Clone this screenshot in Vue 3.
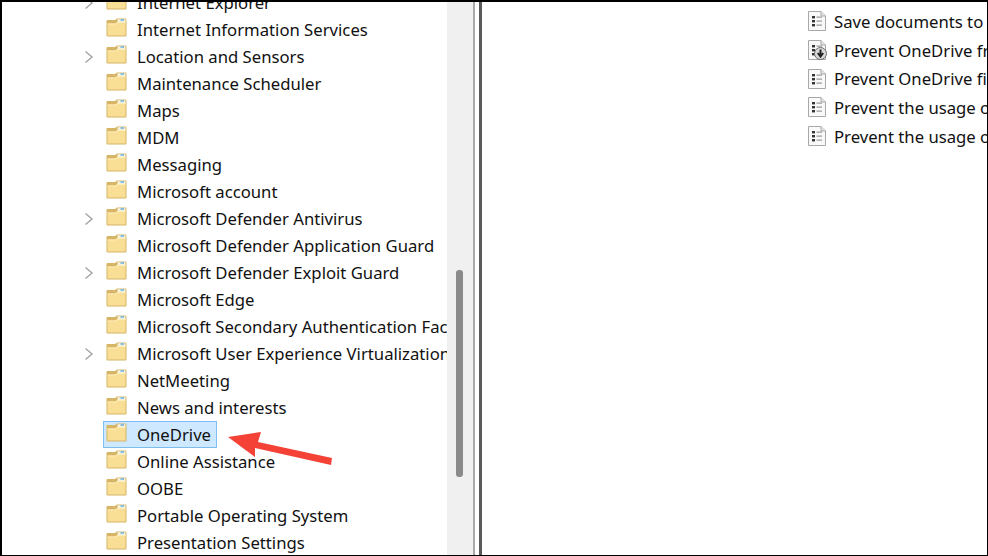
<script setup>
const rows = [
  { name: 'Internet Explorer', arrow: true },
  { name: 'Internet Information Services' },
  { name: 'Location and Sensors', arrow: true },
  { name: 'Maintenance Scheduler' },
  { name: 'Maps' },
  { name: 'MDM' },
  { name: 'Messaging' },
  { name: 'Microsoft account' },
  { name: 'Microsoft Defender Antivirus', arrow: true },
  { name: 'Microsoft Defender Application Guard' },
  { name: 'Microsoft Defender Exploit Guard', arrow: true },
  { name: 'Microsoft Edge' },
  { name: 'Microsoft Secondary Authentication Factor' },
  { name: 'Microsoft User Experience Virtualization', arrow: true },
  { name: 'NetMeeting' },
  { name: 'News and interests' },
  { name: 'OneDrive', selected: true },
  { name: 'Online Assistance' },
  { name: 'OOBE' },
  { name: 'Portable Operating System' },
  { name: 'Presentation Settings' },
]
const policies = [
  { name: 'Save documents to OneDrive by default' },
  { name: 'Prevent OneDrive from generating network traffic', download: true },
  { name: 'Prevent OneDrive files from syncing over metered connections' },
  { name: 'Prevent the usage of OneDrive for file storage' },
  { name: 'Prevent the usage of OneDrive for file storage (legacy)' },
]
</script>

<template>
  <div class="screen">
    <div class="tree">
      <div class="tree-list">
        <div v-for="r in rows" :key="r.name" class="row">
          <svg v-if="r.arrow" class="chev" width="10" height="14" viewBox="0 0 10 14"><path d="M1.5 1.5 L8 7 L1.5 12.5" fill="none" stroke="#a6a6a6" stroke-width="1.5"/></svg>
          <span v-else class="chev"></span>
          <span class="item" :class="{ selected: r.selected }">
            <svg class="folder" width="21" height="19" viewBox="0 0 21 19">
              <path d="M0.5 3 Q0.5 2 1.5 2 L9 2 L11 0.5 L19.5 0.5 Q20.5 0.5 20.5 1.5 L20.5 17.5 Q20.5 18.5 19.5 18.5 L1.5 18.5 Q0.5 18.5 0.5 17.5 Z" fill="#d6b566"/>
              <rect x="11.5" y="1.2" width="8" height="3" fill="#f6f1dc"/>
              <rect x="14.5" y="1.2" width="3.5" height="1.6" fill="#6fb4e0"/>
              <path d="M1.5 5.5 L9.5 5.5 L11.5 4 L19.5 4 L19.5 17.5 L1.5 17.5 Z" fill="#f9de96"/>
              <path d="M1.5 5.5 L9.5 5.5 L11.5 4 L19.5 4 L19.5 5 L11.8 5 L9.8 6.5 L1.5 6.5 Z" fill="#fdeeb9"/>
            </svg>
            <span class="label">{{ r.name }}</span>
          </span>
        </div>
      </div>
      <div class="scroll"><div class="thumb"></div></div>
    </div>
    <div class="splitter"></div>
    <div class="detail">
      <div class="policies">
        <div v-for="p in policies" :key="p.name" class="policy">
          <svg class="doc" width="20" height="22" viewBox="0 0 20 22">
            <path d="M1.5 1.5 H14 L18.5 6 V20.5 H1.5 Z" fill="#f9f9f9" stroke="#a8a8a8"/>
            <path d="M14 1.5 V6 H18.5" fill="#e4e4e4" stroke="#a8a8a8"/>
            <rect x="5" y="6" width="3" height="2.4" fill="#333"/>
            <rect x="5" y="10" width="3" height="2.4" fill="#333"/>
            <rect x="5" y="14" width="3" height="2.4" fill="#333"/>
            <path d="M9.5 7.2 H15 M9.5 11.2 H15 M9.5 15.2 H15" stroke="#9a9a9a" stroke-width="1.2"/>
            <g v-if="p.download">
              <circle cx="13.5" cy="14.5" r="6" fill="#d8d8d8" stroke="#6a6a6a"/>
              <path d="M13.5 10.5 V16 M10.8 14 L13.5 17.5 L16.2 14" fill="none" stroke="#222" stroke-width="2"/>
            </g>
          </svg>
          <span class="policy-text">{{ p.name }}</span>
        </div>
      </div>
    </div>
    <svg class="arrow" width="110" height="40" viewBox="0 0 110 40">
      <path d="M0 6 L33 1 L30 11 L104 27 L103 34 L27 17 L27 26 Z" fill="#f44336"/>
    </svg>
    <div class="frame"></div>
  </div>
</template>

<style>
html, body { margin: 0; background: #fff; }
</style>

<style scoped>
.screen {
  position: relative;
  width: 988px;
  height: 556px;
  overflow: hidden;
  display: flex;
  background: #fff;
  font-family: "Noto Sans", "Open Sans", sans-serif;
  color: #111;
}
.frame {
  position: absolute;
  inset: 0;
  border-style: solid;
  border-color: #000;
  border-width: 2px 1px 1px 2px;
  pointer-events: none;
}
.tree {
  width: 473px;
  height: 556px;
  display: flex;
  flex: none;
  border-right: 2px solid #a9a9a9;
  box-sizing: content-box;
}
.tree-list {
  width: 447px;
  flex: none;
  overflow: hidden;
  margin-top: -11px;
}
.row {
  height: 27px;
  display: flex;
  align-items: center;
  white-space: nowrap;
  padding-left: 84px;
}
.chev {
  width: 10px;
  margin-right: 9px;
  flex: none;
}
.item {
  display: flex;
  align-items: center;
  gap: 10px;
  height: 27px;
  box-sizing: border-box;
  padding: 0 5px 0 2px;
  border: 1px solid transparent;
}
.item.selected {
  background: #cde8ff;
  border-color: #7cbdf0;
}
.folder { flex: none; margin-top: -4px; }
.label { font-size: 16.7px; }
.scroll {
  width: 26px;
  background: #f0f0f0;
}
.thumb {
  width: 7px;
  height: 207px;
  background: #8a8a8a;
  border-radius: 3px;
  margin: 270px 0 0 9px;
}
.splitter {
  width: 4px;
  flex: none;
  border-right: 3px solid #5a5a5a;
  box-sizing: content-box;
}
.detail {
  flex: 1;
  min-width: 0;
  overflow: hidden;
  padding-left: 325px;
  padding-top: 7px;
}
.policy {
  height: 28.7px;
  display: flex;
  align-items: center;
  gap: 7px;
  white-space: nowrap;
}
.doc { flex: none; }
.policy-text { font-size: 16.7px; }
.arrow {
  position: absolute;
  left: 228px;
  top: 431px;
}
</style>
